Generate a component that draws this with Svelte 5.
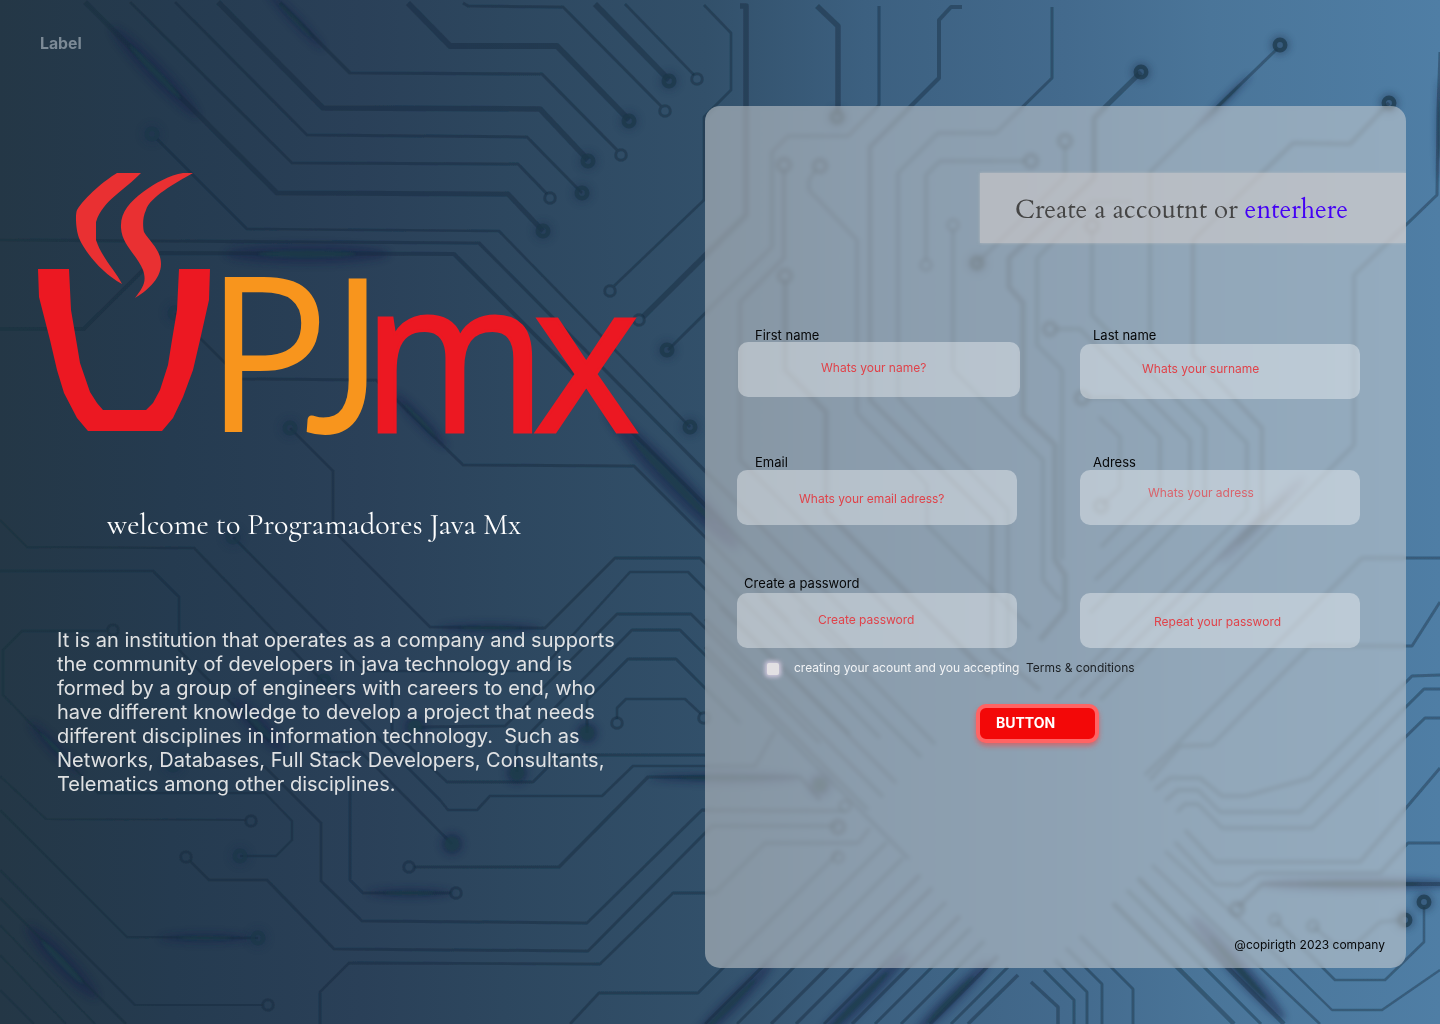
<script>
  // Circuit traces: d = polyline points, w = stroke width
  const traces = [
    { d: '85,2 277,193 508,194 543,231', w: 5 },
    { d: '130,2 292,163 518,164 547,194', w: 3 },
    { d: '175,2 307,135 527,137 582,193', w: 3 },
    { d: '218,2 323,108 540,109 588,160', w: 5.5 },
    { d: '280,3 350,73 542,74 617,150', w: 3.2 },
    { d: '408,3 450,46 557,46 629,120', w: 6 },
    { d: '463,3 468,6 563,7 661,106', w: 3 },
    { d: '595,4 669,80', w: 6 },
    { d: '625,4 694,75', w: 2.6 },
    { d: '704,5 731,33 731,90 704,117 704,200 614,286', w: 2.6 },
    { d: '740,6 746,6 746,215 643,317', w: 5.5 },
    { d: '817,6 838,26 838,115', w: 5.5 },
    { d: '157,139 247,229 499,231 690,427', w: 2.6 },
    { d: '0,240 479,243 705,471 860,626', w: 3.2 },
    { d: '0,329 84,329 160,253 454,254 870,670', w: 4 },
    { d: '175,313 241,379 376,380 463,465 634,466 790,622', w: 3 },
    { d: '290,428 333,471 333,530 430,627 545,628 615,558 700,558 880,738', w: 3 },
    { d: '0,520 27,547 194,548 365,725 440,800 448,810 477,810 490,796 602,796 633,766 755,766 775,731', w: 2.6 },
    { d: '0,571 153,571 179,597 179,650 270,742', w: 2.6 },
    { d: '233,537 366,671 540,671 630,572 688,572 850,734', w: 2.6 },
    { d: '108,631 22,631 3,650 3,695 98,793 265,793 292,821 292,840 276,856 240,856', w: 2.4 },
    { d: '0,776 46,819 246,820', w: 2.2 },
    { d: '0,810 127,937 258,938', w: 2.4 },
    { d: '0,870 135,1005 263,1005', w: 2.2 },
    { d: '0,898 126,1024', w: 3 },
    { d: '0,925 95,1024', w: 2 },
    { d: '0,955 66,1024', w: 2 },
    { d: '0,990 34,1024', w: 2 },
    { d: '190,861 209,880 267,880 334,949 588,951 712,826 838,826', w: 3 },
    { d: '173,767 265,767 321,823 321,881 362,921 587,923 702,810 845,811', w: 3 },
    { d: '350,790 350,880 363,893 451,893', w: 2.8 },
    { d: '320,1024 320,992 349,963 600,964 673,893 715,893 765,843 858,843 870,828', w: 2.8 },
    { d: '570,1024 599,993 698,993 838,853', w: 2.8 },
    { d: '414,867 559,867 648,777 800,777 820,800', w: 3.2 },
    { d: '452,844 361,752 325,752', w: 2.6 },
    { d: '392,680 392,730 447,782 533,782 560,755 705,755', w: 2.8 },
    { d: '415,727 505,726 617,614 691,614 820,743', w: 3 },
    { d: '517,772 517,746 632,630 680,630 909,859', w: 2.8 },
    { d: '587,733 587,700 628,659 676,659 740,723', w: 2.8 },
    { d: '617,719 617,708 626,699 685,699 701,714', w: 2.6 },
    { d: '879,6 879,105 848,136 788,136 772,152 772,247 668,350', w: 3 },
    { d: '962,7 951,7 939,20 939,78 870,147 870,400 992,520 992,650 1040,690', w: 4 },
    { d: '1052,7 1052,78 996,133 938,133 898,173 898,397 1008,510 1008,650', w: 3 },
    { d: '1026,161 940,161 926,175 926,260', w: 3 },
    { d: '953,230 953,370 1043,460 1043,580 1060,600', w: 3 },
    { d: '784,170 784,258 740,302 740,460 900,620', w: 3.5 },
    { d: '816,169 809,180 809,190 857,240 857,413 927,485 927,525 1030,628', w: 3 },
    { d: '785,280 785,370 826,412 826,512 990,676', w: 5 },
    { d: '1141,72 1094,118 1094,178 1009,258 1009,287 1023,303 1023,415 1055,445 1055,560 1065,575 1065,610 1040,640', w: 5 },
    { d: '1065,146 1065,177 977,263', w: 3 },
    { d: '1277,49 1150,172 1150,345 1247,443 1247,510 1055,700', w: 3 },
    { d: '1389,103 1350,144 1293,143 1193,240 1193,355 1262,428 1262,515 1080,697', w: 3.5 },
    { d: '1131,202 1092,202 1037,258 1037,345 1062,370 1062,560', w: 3 },
    { d: '1092,231 1092,315 1205,428 1205,498 1090,613', w: 3 },
    { d: '1440,52 1438,110 1437,195 1354,275 1354,445 1100,700', w: 3 },
    { d: '1055,329 1080,329 1190,440 1190,490 1095,580', w: 3 },
    { d: '1087,398 1120,398 1160,438 1160,487 1101,547', w: 3 },
    { d: '1099,417 1120,437 1120,488 1101,506', w: 2.6 },
    { d: '1440,558 1362,558 1178,743 1145,775', w: 3 },
    { d: '1440,602 1412,646 1310,646 1212,745 1180,746 1150,780', w: 3 },
    { d: '1440,675 1412,676 1310,778 1246,796 1222,796 1200,778 1170,778 1155,790', w: 3 },
    { d: '1440,689 1424,689 1300,812 1220,812 1198,790 1178,790 1165,801', w: 3 },
    { d: '1440,718 1425,718 1312,828 1222,828 1198,804 1185,804 1177,812', w: 3 },
    { d: '1440,768 1360,862 1215,862 1185,830', w: 3 },
    { d: '1440,843 1408,843 1380,873 1258,873 1240,885 1215,884 1175,842', w: 3 },
    { d: '1440,884 1262,884 1237,908', w: 4 },
    { d: '1424,907 1424,942 1385,980 1335,980 1275,920', w: 2.6 },
    { d: '1400,920 1380,922 1355,945 1335,945 1313,926', w: 2.4 },
    { d: '1440,970 1382,1010 1332,1010 1245,925 1165,851', w: 2.4 },
    { d: '935,744 800,609', w: 3 },
    { d: '921,757 760,596', w: 3 },
    { d: '896,783 720,607', w: 3 },
    { d: '883,797 705,619', w: 3 },
    { d: '868,810 705,647', w: 3 },
    { d: '887,842 705,1024', w: 3 },
    { d: '903,858 737,1024', w: 3 },
    { d: '920,875 771,1024', w: 3.2 },
    { d: '932,888 796,1024', w: 3.2 },
    { d: '946,902 824,1024', w: 3 },
    { d: '960,916 852,1024', w: 3.2 },
    { d: '971,928 875,1024', w: 3 },
    { d: '984,941 901,1024', w: 3 },
    { d: '998,956 930,1024', w: 3.5 },
    { d: '1008,967 951,1024', w: 3 },
    { d: '1018,975 968,1024', w: 3.5 },
    { d: '1031,982 1058,1007 1058,1024', w: 3.5 },
    { d: '1044,970 1074,1000 1074,1024', w: 3 },
    { d: '1055,960 1087,992 1087,1024', w: 2.8 },
    { d: '1066,948 1102,984 1102,1024', w: 2.8 },
    { d: '1080,936 1133,989 1133,1024', w: 2.8 },
    { d: '1113,903 1234,1024', w: 4.5 },
    { d: '1127,890 1261,1024', w: 3 },
    { d: '1138,878 1284,1024', w: 4.5 },
    { d: '1152,865 1320,1024', w: 2.6 }
  ];

  // Pads: small open rings and large soft rings
  const smallPads = [
    [550, 198], [621, 155], [665, 111], [697, 79], [610, 291], [639, 320], [113, 630], [251, 821],
    [268, 1005], [186, 857], [456, 893], [409, 867], [617, 723], [704, 718], [926, 265], [953, 225],
    [1313, 926], [1275, 920], [838, 857], [845, 806]
  ];
  const bigPads = [
    [152, 134], [543, 231], [582, 193], [588, 161], [629, 121], [669, 81], [690, 427], [667, 350],
    [175, 313], [290, 428], [233, 537], [240, 856], [258, 938], [324, 681], [173, 765], [837, 117],
    [977, 263], [1141, 72], [1280, 45], [1389, 103], [1424, 902], [1405, 920]
  ];
  // Pads that sit under the glass panel, drawn with a heavier ring but no halo
  const midPads = [
    [784, 165], [820, 166], [785, 276], [1031, 161], [1065, 141], [1092, 226], [1082, 398],
    [1101, 506], [1050, 329], [838, 827], [1237, 909]
  ];
  const blobs = [[452, 844], [415, 727], [517, 773], [587, 733], [820, 785]];

  // Lens-shaped glows: centre, half length, half thickness, angle
  const glows = [
    [155, 72, 62, 9, 46], [307, 254, 82, 10, 0], [295, 20, 40, 5, 46], [420, 420, 38, 6, 46],
    [672, 480, 95, 12, 46], [490, 628, 50, 5, 0], [258, 725, 36, 9, 46], [55, 748, 36, 6, 46],
    [205, 938, 45, 5, 0], [410, 893, 42, 5, 0], [62, 962, 50, 10, 46], [725, 778, 75, 5, 0],
    [730, 1005, 60, 8, -45], [858, 1002, 70, 9, -45], [950, 1000, 55, 7, -45],
    [1238, 968, 70, 9, 48], [1360, 884, 100, 6, 0], [1225, 100, 36, 3, -45],
    [1440, 130, 50, 3, 90], [1262, 520, 60, 5, -45]
  ];

  const fields = [
    { id: 'first', label: 'First name', hint: 'Whats your name?' },
    { id: 'last', label: 'Last name', hint: 'Whats your surname' },
    { id: 'email', label: 'Email', hint: 'Whats your email adress?' },
    { id: 'address', label: 'Adress', hint: 'Whats your adress' },
    { id: 'password', label: 'Create a password', hint: 'Create password' },
    { id: 'repeat', label: '', hint: 'Repeat your password' }
  ];
</script>

<div class="page">
  <svg class="backdrop" viewBox="0 0 1440 1024" width="1440" height="1024" aria-hidden="true">
    <defs>
      <linearGradient id="trace" gradientUnits="userSpaceOnUse" x1="0" y1="0" x2="1440" y2="0">
        <stop offset="0" stop-color="#1c303c" stop-opacity=".5" />
        <stop offset=".3" stop-color="#162b40" stop-opacity=".5" />
        <stop offset=".55" stop-color="#162d40" stop-opacity=".46" />
        <stop offset="1" stop-color="#122c40" stop-opacity=".4" />
      </linearGradient>
      <filter id="soft" x="-10%" y="-10%" width="120%" height="120%"><feGaussianBlur stdDeviation=".6" /></filter>
      <filter id="haze" x="-5%" y="-5%" width="110%" height="110%"><feGaussianBlur stdDeviation="3.5" /></filter>
      <filter id="core" x="-5%" y="-5%" width="110%" height="110%"><feGaussianBlur stdDeviation="1.2" /></filter>
    </defs>
    <g filter="url(#haze)" fill="#182249" opacity=".5">
      {#each glows as [x, y, a, b, r]}
        <ellipse cx={x} cy={y} rx={a} ry={b} transform={`rotate(${r} ${x} ${y})`} />
      {/each}
      {#each blobs as [x, y]}<circle cx={x} cy={y} r="11" />{/each}
    </g>
    <g filter="url(#haze)" fill="#1a3050" opacity=".4">
      {#each bigPads as [x, y]}<circle cx={x} cy={y} r="10" />{/each}
    </g>
    <g filter="url(#soft)" fill="none" stroke="url(#trace)" stroke-linejoin="round">
      {#each traces as t}<polyline points={t.d} stroke-width={t.w} />{/each}
      {#each smallPads as [x, y]}<circle cx={x} cy={y} r="5.3" stroke-width="3" />{/each}
      {#each midPads as [x, y]}<circle cx={x} cy={y} r="6" stroke-width="5" />{/each}
    </g>
    <g filter="url(#soft)" fill="none" stroke="#1b384a" stroke-width="4.5" opacity=".7">
      {#each bigPads as [x, y]}<circle cx={x} cy={y} r="5.2" />{/each}
    </g>
    <g filter="url(#core)" fill="#1b4048" opacity=".65">
      {#each glows as [x, y, a, b, r]}
        <ellipse cx={x} cy={y} rx={a * 0.6} ry={b * 0.34} transform={`rotate(${r} ${x} ${y})`} />
      {/each}
      {#each blobs as [x, y]}<circle cx={x} cy={y} r="7.5" />{/each}
    </g>
  </svg>

  <section class="intro">
    <span class="tag">Label</span>
    <svg class="logo" viewBox="38 173 602 266" width="602" height="266" role="img" aria-label="UPJmx">
      <g fill="#e93032">
        <path d="M117 173H141C125 190 103 200 96 222V240C102 258 115 270 122 284C100 272 84 250 79 238C76 230 75 215 77 210C85 197 105 180 117 173Z" />
        <path d="M183 173H193C175 183 150 197 146 210C142 218 143 228 144 232C150 242 161 250 161 264C161 280 145 292 135 298C143 287 147 282 143 270C137 255 122 245 121 228C120 212 130 202 143 192C155 183 170 175 183 173Z" />
      </g>
      <path
        fill="#ec1822"
        d="M38 269H69L71 310L77 345L80 363L90 392L97 403L103 410H146L153 403L160 390L168 365L172 340L177 310L179 269H210L209 300L200 340L193 370L183 397L173 418L162 431H88L77 418L64 393L57 370L50 340L39 297Z"
      />
      <text class="glyph amber" transform="translate(204.5 432) scale(.965 1)">P</text>
      <text class="glyph amber hook" transform="translate(304.5 433) scale(.855 1.01)">J</text>
      <text class="glyph red" transform="translate(362 431.5) scale(.925 .985)">m</text>
      <text class="glyph red" transform="translate(532.5 431.5) scale(.95 .98)">x</text>
    </svg>
    <h1>welcome to Programadores Java Mx</h1>
    <p>
      It is an institution that operates as a company and supports<br />
      the community of developers in java technology and is<br />
      formed by a group of engineers with careers to end, who<br />
      have different knowledge to develop a project that needs<br />
      different disciplines in information technology.&nbsp; Such as<br />
      Networks, Databases, Full Stack Developers, Consultants,<br />
      Telematics among other disciplines.
    </p>
  </section>

  <section class="panel">
    <header><h2>Create a accoutnt or <a href="#enter">enterhere</a></h2></header>
    <form>
      <div class="fields">
        {#each fields as f}
          <div class={`field ${f.id}`}>
            <label for={f.id}>{f.label}</label>
            <input id={f.id} placeholder={f.hint} />
          </div>
        {/each}
      </div>
      <div class="consent">
        <span class="box"></span>
        <span>creating your acount and you accepting</span>
        <a href="#terms">Terms &amp; conditions</a>
      </div>
      <button type="button">BUTTON</button>
    </form>
    <footer>@copirigth 2023 company</footer>
  </section>
</div>

<style>
  :global(body) {
    margin: 0;
  }
  .page {
    position: relative;
    display: grid;
    grid-template-columns: 705px 701px;
    box-sizing: border-box;
    width: 1440px;
    height: 1024px;
    overflow: hidden;
    font-family: Inter, 'Liberation Sans', sans-serif;
    background: linear-gradient(90deg, #243746 0, #253b50 12%, #2a4058 25%, #2d475f 35%, #32506a 49%, #3c6080 60%, #436a8d 74%, #4a7599 84%, #4f7ea5 100%);
  }
  .backdrop {
    position: absolute;
    inset: 0;
  }
  .intro {
    position: relative;
    display: flex;
    flex-direction: column;
    align-items: flex-start;
  }
  .tag {
    margin: 34px 0 0 40px;
    font-size: 15.8px;
    line-height: 20px;
    font-weight: 700;
    color: #7c8a96;
  }
  .logo {
    margin: 119px 0 0 38px;
    display: block;
    overflow: visible;
  }
  .glyph {
    font-family: 'Open Sans', 'Noto Sans', sans-serif;
    font-size: 216px;
  }
  .hook {
    font-family: Lato, 'Open Sans', sans-serif;
    font-size: 214px;
  }
  .amber {
    fill: #f8951d;
  }
  .red {
    fill: #ec1822;
    stroke: #ec1822;
    stroke-width: 3px;
    font-weight: 500;
  }
  h1,
  h2 {
    margin: 0;
    font-weight: 400;
    white-space: nowrap;
  }
  h1 {
    margin: 67px 0 0 107px;
    font-family: Cormorant, 'Cormorant Garamond', 'Liberation Serif', serif;
    font-size: 30px;
    line-height: 38px;
    color: #fff;
  }
  p {
    margin: 84px 0 0 57px;
    font-size: 20px;
    line-height: 24px;
    white-space: nowrap;
    color: rgba(238, 238, 238, 0.93);
  }
  .panel {
    position: relative;
    box-sizing: border-box;
    height: 862px;
    margin-top: 106px;
    padding-top: 67px;
    border-radius: 15px;
    overflow: hidden;
    display: flex;
    flex-direction: column;
    background: rgba(217, 217, 217, 0.5);
    backdrop-filter: blur(2px);
  }
  header {
    align-self: flex-end;
    box-sizing: border-box;
    width: 426px;
    height: 70px;
    padding-left: 35px;
    background: rgba(217, 209, 207, 0.53);
    box-shadow: 0 0 3px rgba(217, 209, 207, 0.5);
  }
  h2 {
    font-family: Cardo, 'EB Garamond', Cormorant, 'Liberation Serif', serif;
    font-size: 26px;
    line-height: 73px;
    color: #454545;
  }
  h2 a {
    color: #4400f5;
    text-decoration: none;
  }
  .fields {
    display: grid;
    grid-template-columns: 343px 280px;
    grid-template-rows: 126px 121px 73px;
    margin: 85px 0 0 32px;
  }
  .field {
    display: flex;
    flex-direction: column;
    width: 280px;
  }
  label {
    height: 16px;
    padding-left: 13px;
    font-size: 13px;
    line-height: 16px;
    color: #060708;
  }
  input {
    box-sizing: border-box;
    width: 100%;
    height: 55px;
    border: 0;
    border-radius: 10px;
    padding: 0 0 0 60px;
    background: rgba(255, 255, 255, 0.38);
    font: 12px Inter, 'Liberation Sans', sans-serif;
    outline: none;
  }
  input::placeholder {
    color: #e0434a;
    opacity: 1;
  }
  .first {
    width: 282px;
    margin-left: 1px;
  }
  .first label {
    height: 14px;
    padding-left: 17px;
    line-height: 14px;
  }
  .first input {
    padding: 0 0 4px 83px;
  }
  .last label {
    line-height: 14px;
  }
  .last input {
    padding: 0 0 7px 62px;
  }
  .email label {
    padding-left: 18px;
  }
  .email input {
    padding: 1px 0 0 62px;
  }
  .address input {
    padding: 0 0 11px 68px;
  }
  .address input::placeholder {
    color: #da646c;
  }
  .password label {
    height: 18px;
    padding-left: 7px;
  }
  .password input {
    padding: 0 0 3px 81px;
  }
  .repeat label {
    height: 18px;
  }
  .repeat input {
    padding: 1px 0 0 74px;
  }
  .consent {
    display: flex;
    height: 20px;
    margin: 10px 0 0 61px;
    font-size: 12px;
    line-height: 20px;
    color: #f2f4f6;
  }
  .box {
    width: 12px;
    height: 12px;
    margin: 5px 15px 0 1px;
    border-radius: 2px;
    background: #e2e0e3;
    box-shadow: 0 0 4px 2px rgba(213, 203, 226, 0.95);
  }
  .consent a {
    margin-left: 6.5px;
    color: #1c2024;
    text-decoration: none;
  }
  button {
    box-sizing: border-box;
    display: block;
    width: 123px;
    height: 39px;
    margin: 26px 0 0 271px;
    padding: 0 0 1px 16px;
    border: 4px solid #ff6464;
    border-radius: 10px;
    background: #f30808;
    box-shadow: 0 3px 5px rgba(240, 70, 70, 0.6);
    font: 700 14px/28px Inter, 'Liberation Sans', sans-serif;
    text-align: left;
    color: #fff;
  }
  footer {
    margin: auto 21px 13px auto;
    font-size: 12px;
    line-height: 20px;
    color: #060708;
  }
</style>
